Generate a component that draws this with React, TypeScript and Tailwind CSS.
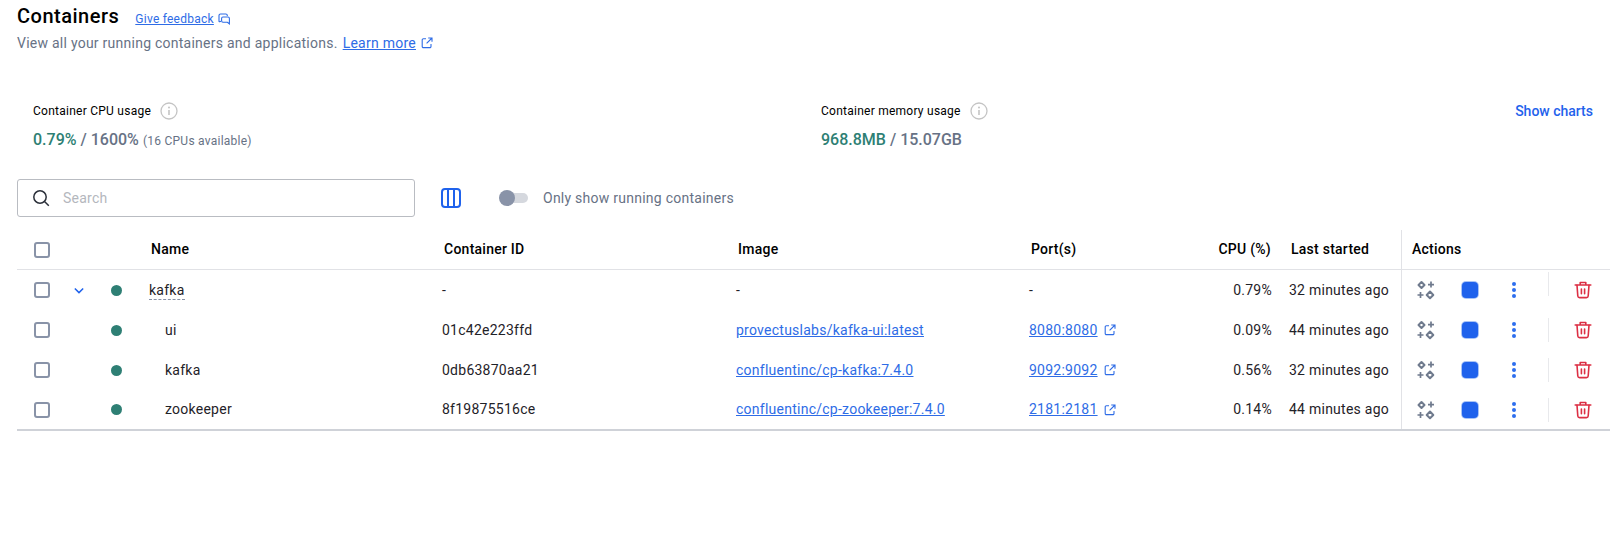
import React from "react";

const rowCols = "grid grid-cols-[56px_38px_38px_293px_294px_293px_162px_81px_129px_1fr]";

const containers = [
  { name: "kafka", id: "-", image: "", port: "", cpu: "0.79%", started: "32 minutes ago", parent: true, h: "h-10" },
  { name: "ui", id: "01c42e223ffd", image: "provectuslabs/kafka-ui:latest", port: "8080:8080", cpu: "0.09%", started: "44 minutes ago", h: "h-10" },
  { name: "kafka", id: "0db63870aa21", image: "confluentinc/cp-kafka:7.4.0", port: "9092:9092", cpu: "0.56%", started: "32 minutes ago", h: "h-10" },
  { name: "zookeeper", id: "8f19875516ce", image: "confluentinc/cp-zookeeper:7.4.0", port: "2181:2181", cpu: "0.14%", started: "44 minutes ago", h: "h-[39px]" },
];

function ExternalIcon({ className }: { className?: string }) {
  return (
    <svg viewBox="0 0 12 12" fill="none" stroke="currentColor" strokeWidth="1.1" className={className}>
      <path d="M5 1.8H2.4A1.2 1.2 0 0 0 1.2 3v6.4a1.2 1.2 0 0 0 1.2 1.2h6.4A1.2 1.2 0 0 0 10 9.4V7" />
      <path d="M7.2 1H11v3.8M11 1 5.6 6.4" />
    </svg>
  );
}

function InfoIcon() {
  return (
    <svg viewBox="0 0 18 18" className="w-[18px] h-[18px] text-[#c4c4c4]" fill="none" stroke="currentColor">
      <circle cx="9" cy="9" r="8" strokeWidth="1.3" />
      <path d="M9 8v5" strokeWidth="1.6" />
      <circle cx="9" cy="5.5" r="1" fill="currentColor" stroke="none" />
    </svg>
  );
}

function Checkbox() {
  return <div className="w-[16px] h-[16px] rounded-[3px] border-2 border-[#8993a8] bg-white" />;
}

function SparkleIcon() {
  return (
    <svg viewBox="0 0 20 20" className="w-5 h-5 text-[#6f7a8d]" fill="none" stroke="currentColor" strokeWidth="2" strokeLinejoin="round">
      <path d="M5.5 2 8.5 5 5.5 8 2.5 5Z" />
      <path d="M14 11.5 17.3 15 14 18.3 10.7 15Z" />
      <path d="M15 1.6v6M12 4.6h6M4.5 12v6M1.5 15h6" strokeWidth="1.7" />
    </svg>
  );
}

function TrashIcon() {
  return (
    <svg viewBox="0 0 18 18" className="w-[18px] h-[18px] text-[#dc2f44]" fill="none" stroke="currentColor" strokeWidth="1.6" strokeLinecap="round" strokeLinejoin="round">
      <path d="M1.2 4h15.6M6.2 3.6V1.5h5.6v2.1" />
      <path d="M3 4.2 3.8 15a1.8 1.8 0 0 0 1.8 1.6h6.8a1.8 1.8 0 0 0 1.8-1.6L15 4.2" />
      <path d="M7.4 8v4.8M10.6 8v4.8" />
    </svg>
  );
}

function Actions({ parent }: { parent?: boolean }) {
  return (
    <div className="flex items-center h-full border-l border-[#e1e2e6] pl-[14px]">
      <SparkleIcon />
      <div className="ml-[26px] w-4 h-4 rounded-[4px] bg-[#1f62ec] shadow-[0_0_0_1px_#a9c4f6]" />
      <div className="ml-[34px] w-[4px] flex flex-col gap-[2px]">
        <div className="w-[4px] h-[4px] rounded-full bg-[#2e6eee]" />
        <div className="w-[4px] h-[4px] rounded-full bg-[#2e6eee]" />
        <div className="w-[4px] h-[4px] rounded-full bg-[#2e6eee]" />
      </div>
      <div className={`ml-[32px] w-px h-6 bg-[#e8e9ec] ${parent ? "-mt-[12px]" : ""}`} />
      <div className="ml-[25px]">
        <TrashIcon />
      </div>
    </div>
  );
}

function App() {
  return (
    <div className="w-[1621px] h-[551px] bg-white overflow-hidden font-['Roboto',sans-serif] text-[14px] tracking-[0.25px] text-[#1f2228]">
      <div className="pl-[17px] pr-[11px]">
        <div className="flex items-center h-[32px]">
          <h1 className="text-[20px] leading-[32px] font-medium text-black tracking-[0.5px] -mt-[1px]">Containers</h1>
          <a className="ml-[16px] mt-[5px] text-[12px] text-[#2e6ce6] underline">Give feedback</a>
          <svg viewBox="0 0 12 12" className="ml-[4px] mt-[6px] w-3 h-3 text-[#2e6ce6]" fill="none" stroke="currentColor" strokeWidth="1.1">
            <path d="M2.5 1h5.3A1.5 1.5 0 0 1 9.3 2.5v.6M3 8.2 1.6 8.8A.5.5 0 0 1 1 8.3V2.5A1.5 1.5 0 0 1 2.5 1" />
            <path d="M5 4h5a1.4 1.4 0 0 1 1.4 1.4v5.4l-2-1.6H5A1.4 1.4 0 0 1 3.6 7.8V5.4A1.4 1.4 0 0 1 5 4Z" />
          </svg>
        </div>
        <div className="flex items-center h-[22px] text-[#677285]">
          <span>View all your running containers and applications.</span>
          <a className="ml-[5px] text-[#2e6ce6] underline">Learn more</a>
          <ExternalIcon className="ml-[5px] w-3 h-3 text-[#2e6ce6]" />
        </div>

        <div className="flex mt-[48px] pl-[16px]">
          <div className="w-[788px]">
            <div className="flex items-center gap-[9px] h-[18px] text-[12px] text-black">
              Container CPU usage
              <InfoIcon />
            </div>
            <div className="mt-[8px] h-[20px] flex items-baseline">
              <span className="text-[16px] font-medium text-[#2e7f74] tracking-normal">0.79%</span>
              <span className="text-[16px] font-medium text-[#677285] tracking-normal ml-[4px]">/ 1600%</span>
              <span className="text-[12px] text-[#677285] ml-[4px]">(16 CPUs available)</span>
            </div>
          </div>
          <div className="flex-1">
            <div className="flex items-center gap-[9px] h-[18px] text-[12px] text-black">
              Container memory usage
              <InfoIcon />
            </div>
            <div className="mt-[8px] h-[20px] flex items-baseline text-[16px] font-medium tracking-normal">
              <span className="text-[#2e7f74]">968.8MB</span>
              <span className="text-[#677285] ml-[4px]">/ 15.07GB</span>
            </div>
          </div>
          <a className="text-[#1f62ec] text-[14px] font-medium tracking-normal leading-[18px] mr-[17px]">Show charts</a>
        </div>

        <div className="flex items-center mt-[31px] h-[38px]">
          <div className="w-[398px] h-[38px] rounded-[3px] border border-[#b9bcc2] flex items-center pl-[14px]">
            <svg viewBox="0 0 18 18" className="w-[18px] h-[18px] text-[#2b303a]" fill="none" stroke="currentColor" strokeWidth="1.5">
              <circle cx="8" cy="8" r="6.2" />
              <path d="m12.5 12.5 4.3 4.3" />
            </svg>
            <span className="ml-[13px] text-[#b4b7bd]">Search</span>
          </div>
          <svg viewBox="0 0 20 20" className="ml-[26px] w-5 h-5 text-[#1f62ec]" fill="none" stroke="currentColor" strokeWidth="2">
            <rect x="1" y="1" width="18" height="18" rx="3" />
            <path d="M7 1v18M13 1v18" />
          </svg>
          <div className="relative ml-[38px] w-[29px] h-[16px]">
            <div className="absolute left-[6px] right-0 top-[3px] h-[10px] rounded-full bg-[#d5d8de]" />
            <div className="absolute left-0 top-0 w-4 h-4 rounded-full bg-[#8993a8]" />
          </div>
          <span className="ml-[15px] text-[#677285]">Only show running containers</span>
        </div>

        <div className="mt-[13px]">
          <div className={`${rowCols} h-10 items-center border-b border-[#e1e2e6] font-medium text-black`}>
            <div className="pl-[17px]"><Checkbox /></div>
            <div />
            <div />
            <div className="pl-[2px]">Name</div>
            <div className="pl-[2px]">Container ID</div>
            <div className="pl-[2px]">Image</div>
            <div className="pl-[2px]">Port(s)</div>
            <div className="text-right pr-[1px] whitespace-nowrap">CPU (%)</div>
            <div className="pl-[19px] whitespace-nowrap">Last started</div>
            <div className="h-full border-l border-[#e1e2e6] pl-[10px] flex items-center">Actions</div>
          </div>
          <div className="border-b-2 border-[#cfd2d8]">
            {containers.map((c, i) => (
              <div key={i} className={`${rowCols} ${c.h} items-center`}>
                <div className="pl-[17px]"><Checkbox /></div>
                <div className="pl-[1px]">
                  {c.parent && (
                    <svg viewBox="0 0 12 8" className="w-[10px] h-[7px] text-[#1f62ec]" fill="none" stroke="currentColor" strokeWidth="1.8">
                      <path d="m1 1.5 5 5 5-5" />
                    </svg>
                  )}
                </div>
                <div><div className="w-[11px] h-[11px] rounded-full bg-[#2e7f74]" /></div>
                <div className={c.parent ? "" : "pl-[16px]"}>
                  <span className={c.parent ? "border-b border-dashed border-[#8993a8] leading-[17px] inline-block" : ""}>{c.name}</span>
                </div>
                <div>{c.id}</div>
                <div>{c.image ? <a className="text-[#2e6ce6] underline">{c.image}</a> : "-"}</div>
                <div className="flex items-center">
                  {c.port ? (
                    <>
                      <a className="text-[#2e6ce6] underline">{c.port}</a>
                      <ExternalIcon className="ml-[6px] w-3 h-3 text-[#2e6ce6]" />
                    </>
                  ) : (
                    "-"
                  )}
                </div>
                <div className="text-right">{c.cpu}</div>
                <div className="pl-[17px] whitespace-nowrap">{c.started}</div>
                <Actions parent={c.parent} />
              </div>
            ))}
          </div>
        </div>
      </div>
    </div>
  );
}

export default App;
